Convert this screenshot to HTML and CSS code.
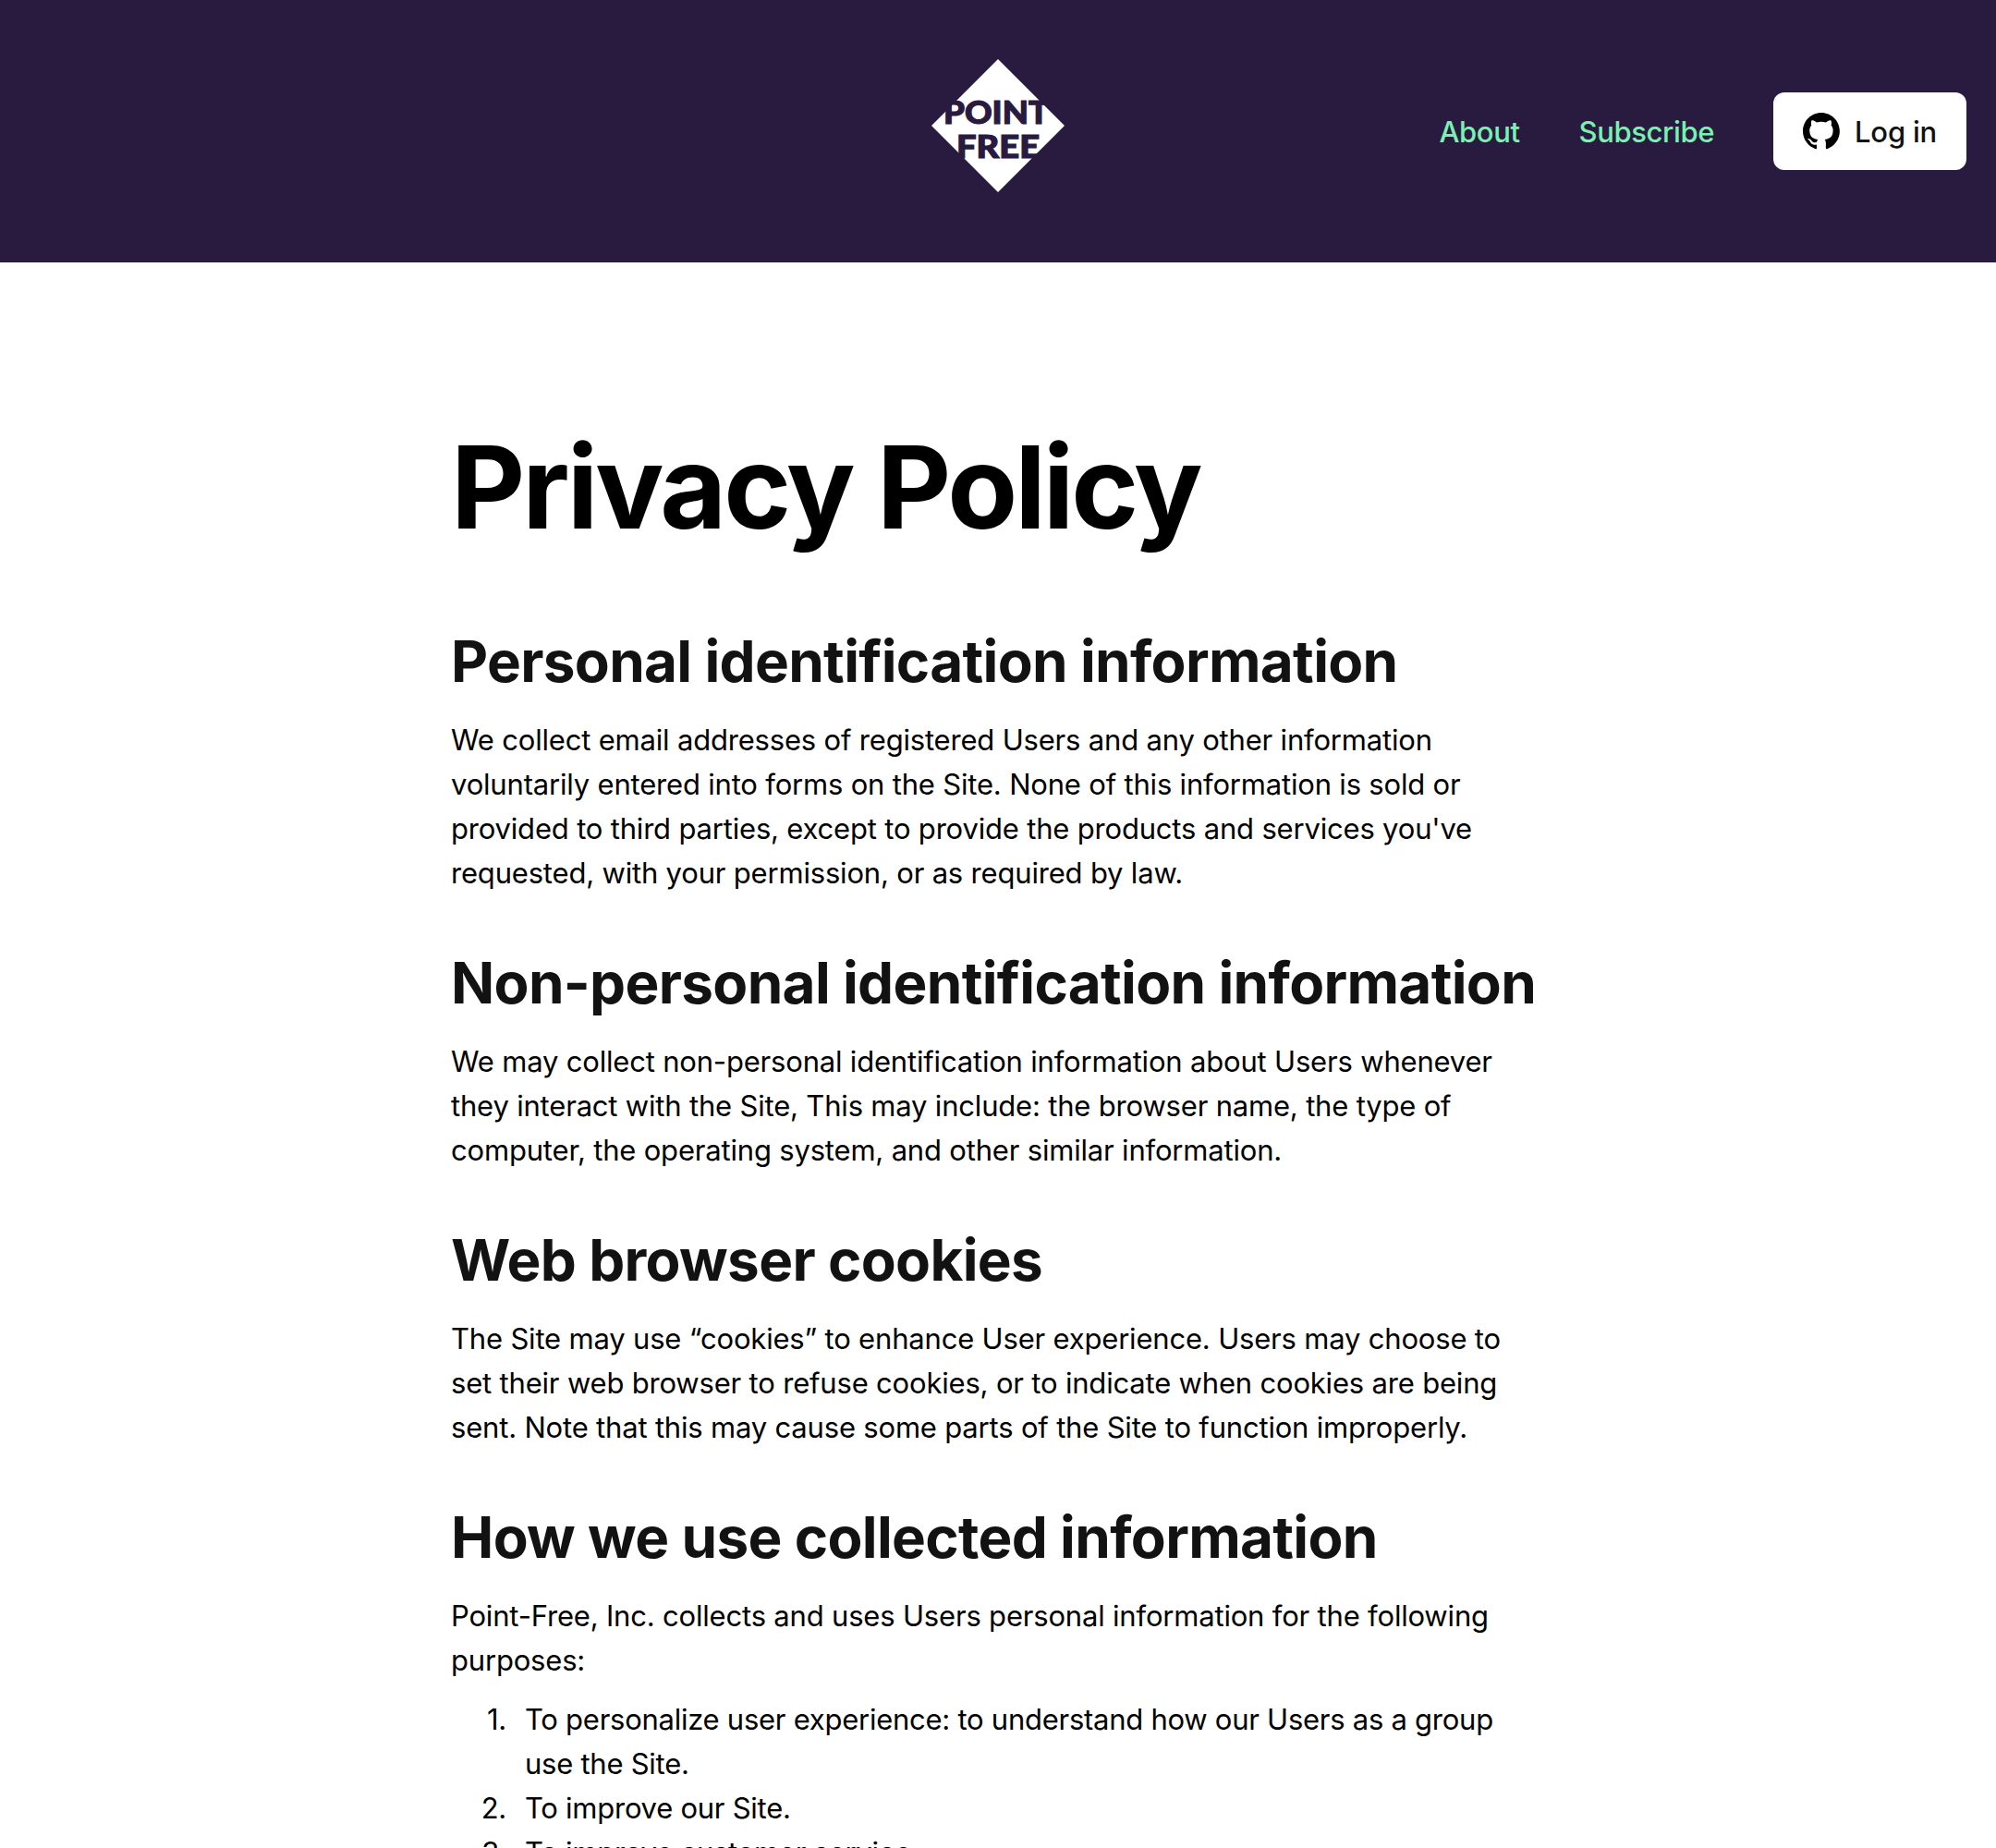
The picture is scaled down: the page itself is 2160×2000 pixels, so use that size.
FILE: index.html
```html
<!DOCTYPE html>
<html lang="en">
<head>
<meta charset="utf-8">
<title>Privacy Policy</title>
<link rel="stylesheet" href="styles.css">
</head>
<body>
<header class="site-header">
  <a class="logo" href="#">
    <svg width="144" height="144" viewBox="0 0 144 144">
      <path d="M72 0 144 72 72 144 0 72Z" fill="#fff"/>
      <text class="logo-text" x="13" y="70.4" textLength="114" lengthAdjust="spacingAndGlyphs">POINT</text>
      <text class="logo-text" x="27" y="106.9" textLength="90" lengthAdjust="spacingAndGlyphs">FREE</text>
    </svg>
  </a>
  <nav class="nav">
    <a class="nav-link" href="#">About</a>
    <a class="nav-link" href="#">Subscribe</a>
    <a class="login" href="#">
      <svg class="login-icon" width="40" height="40" viewBox="0 0 98 98"><path d="M48.854 0C21.839 0 0 22 0 49.217c0 21.756 13.993 40.172 33.405 46.69 2.427.49 3.316-1.059 3.316-2.362 0-1.141-.08-5.052-.08-9.127-13.59 2.934-16.42-5.867-16.42-5.867-2.184-5.704-5.42-7.17-5.42-7.17-4.448-3.015.324-3.015.324-3.015 4.934.326 7.523 5.052 7.523 5.052 4.367 7.496 11.404 5.378 14.235 4.074.404-3.178 1.699-5.378 3.074-6.6-10.839-1.141-22.243-5.378-22.243-24.283 0-5.378 1.94-9.778 5.014-13.2-.485-1.222-2.184-6.275.486-13.038 0 0 4.125-1.304 13.426 5.052a46.97 46.97 0 0 1 12.214-1.63c4.125 0 8.33.571 12.213 1.63 9.302-6.356 13.427-5.052 13.427-5.052 2.67 6.763.97 11.816.485 13.038 3.155 3.422 5.015 7.822 5.015 13.2 0 18.905-11.404 23.06-22.324 24.283 1.78 1.548 3.316 4.481 3.316 9.126 0 6.6-.08 11.897-.08 13.526 0 1.304.89 2.853 3.316 2.364 19.412-6.52 33.405-24.935 33.405-46.691C97.707 22 75.788 0 48.854 0z"/></svg>
      <span>Log in</span>
    </a>
  </nav>
</header>
<main class="content">
  <h1>Privacy Policy</h1>
  <h2>Personal identification information</h2>
  <p>We collect email addresses of registered Users and any other information voluntarily entered into forms on the Site. None of this information is sold or provided to third parties, except to provide the products and services you've requested, with your permission, or as required by law.</p>
  <h2>Non-personal identification information</h2>
  <p>We may collect non-personal identification information about Users whenever they interact with the Site, This may include: the browser name, the type of computer, the operating system, and other similar information.</p>
  <h2>Web browser cookies</h2>
  <p>The Site may use “cookies” to enhance User experience. Users may choose to set their web browser to refuse cookies, or to indicate when cookies are being sent. Note that this may cause some parts of the Site to function improperly.</p>
  <h2>How we use collected information</h2>
  <p>Point-Free, Inc. collects and uses Users personal information for the following purposes:</p>
  <ol>
    <li><span>To personalize user experience: to understand how our Users as a group use the Site.</span></li>
    <li><span>To improve our Site.</span></li>
    <li><span>To improve customer service.</span></li>
  </ol>
</main>
</body>
</html>
```
FILE: styles.css
```css
* { box-sizing: border-box; }

html { overflow: hidden; }

body {
  margin: 0;
  height: 2000px;
  overflow: hidden;
  background: #fff;
  color: #000;
  font-family: Inter, "Liberation Sans", sans-serif;
  font-size: 31px;
  line-height: 48px;
  letter-spacing: -0.186px;
}

a { text-decoration: none; }

/* Header */
.site-header {
  display: grid;
  grid-template-columns: 1fr 144px 1fr;
  align-items: start;
  height: 284px;
  padding: 64px 32px 0;
  background: #291a40;
}

.logo { grid-column: 2; height: 144px; }
.logo svg { display: block; }

.logo-text {
  font-family: Lato, sans-serif;
  font-weight: 900;
  font-size: 34.5px;
  letter-spacing: 0;
  fill: #291a40;
  stroke: #291a40;
  stroke-width: 1.2px;
}

.nav {
  display: flex;
  justify-content: flex-end;
  align-items: center;
  gap: 64px;
  margin-top: 36px;
  font-weight: 500;
  white-space: nowrap;
}

.nav-link {
  padding-top: 2px;
  color: #79f2b0;
  letter-spacing: -0.4px;
}

.login {
  display: flex;
  align-items: center;
  gap: 16px;
  width: 209px;
  height: 84px;
  padding-left: 32px;
  border-radius: 12px;
  background: #fff;
  color: #121212;
}

.login span { padding-top: 2px; }
.login-icon { fill: #000; }

/* Article */
.content {
  width: 1184px;
  margin: 0 auto;
  padding-top: 159px;
}

h1 {
  margin: 0 0 65px;
  font-size: 124px;
  line-height: 168px;
  font-weight: 700;
  letter-spacing: -3.04px;
}

h2 {
  margin: 55px 0 21px;
  font-size: 62px;
  line-height: 80px;
  font-weight: 700;
  letter-spacing: -0.69px;
  color: #121212;
  white-space: nowrap;
}

p { margin: 0; }

ol {
  margin: 16px 0 0;
  padding: 0;
  list-style: none;
  counter-reset: item;
}

li {
  display: grid;
  grid-template-columns: 60px 1fr;
  column-gap: 20px;
  letter-spacing: -0.26px;
  counter-increment: item;
}

li::before {
  content: counter(item) ".";
  text-align: right;
}
```
